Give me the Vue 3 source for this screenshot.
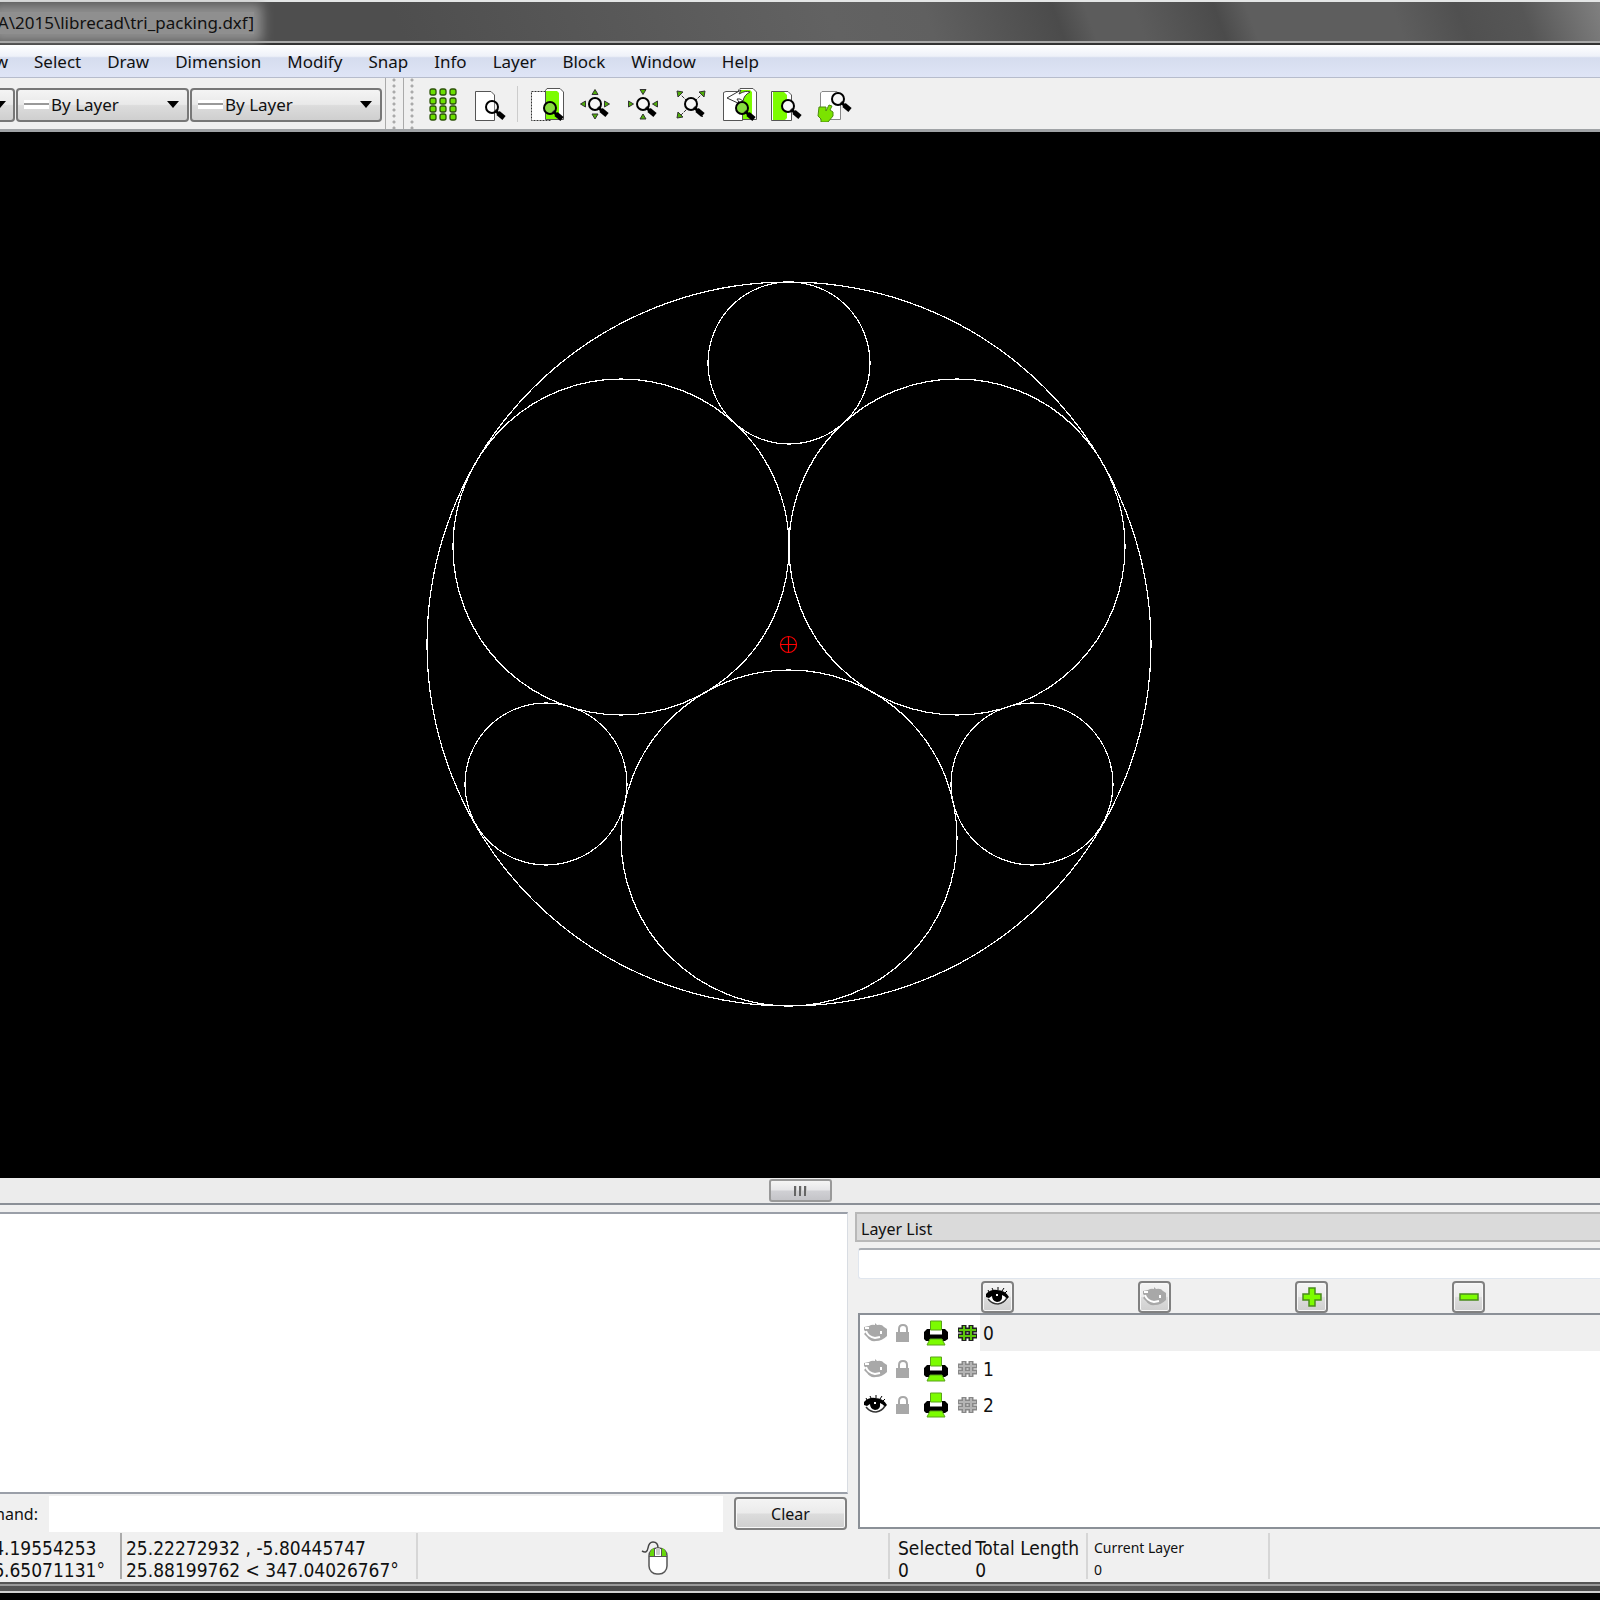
<script setup>
import { ref } from 'vue'

const menus = ['Select', 'Draw', 'Dimension', 'Modify', 'Snap', 'Info', 'Layer', 'Block', 'Window', 'Help']

const views = [
  { id: 'zoom-window', label: 'Zoom redraw' },
  { id: 'zoom-in', label: 'Zoom in' },
  { id: 'zoom-out', label: 'Zoom out' },
  { id: 'zoom-auto', label: 'Auto zoom' },
  { id: 'zoom-previous', label: 'Previous view' },
  { id: 'zoom-area', label: 'Window zoom' },
  { id: 'zoom-pan', label: 'Zoom panning' }
]

const lens = {
  'zoom-window': [27, 22],
  'zoom-in': [24, 18],
  'zoom-out': [24, 18],
  'zoom-auto': [24, 18],
  'zoom-previous': [27, 22],
  'zoom-area': [25, 20],
  'zoom-pan': [27, 13]
}

const layers = ref([
  { name: '0', visible: false, construction: true },
  { name: '1', visible: false, construction: false },
  { name: '2', visible: true, construction: false }
])
const current = ref('0')
const filter = ref('')
const command = ref('')
const log = ref('')

const circles = [
  [789, 513, 362], [621, 416, 168], [957, 416, 168], [789, 707, 168],
  [789, 232, 81], [546, 653, 81], [1032, 653, 81]
]
</script>

<template>
  <div class="window">
    <svg class="defs" width="0" height="0" aria-hidden="true">
      <defs>
        <g id="lens">
          <path d="M6 6L12 11" stroke="#000" stroke-width="5" stroke-linecap="butt" />
          <path d="M3 3L7 7" stroke="#000" stroke-width="3" />
          <circle r="6" fill="#fff" fill-opacity=".25" stroke="#000" stroke-width="2" />
        </g>
        <g id="eye-on">
          <path d="M0 9Q6 2 13 4Q20 5 23 11Q18 18 10 18Q5 17 1 13L4 9Z" fill="#fff" />
          <path d="M0 7Q5 2 11 3Q19 3 23 10L21 12Q19 9 16 8Q17 15 11 15Q6 14 6 9L3 11L0 10Z" fill="#000" />
          <path d="M2 12Q6 17 12 17Q18 16 21 11" fill="none" stroke="#333" stroke-width="1.5" />
          <path d="M3 5L2 3M7 3L6 1M12 3V0M16 4L18 1M19 6L21 4" stroke="#000" stroke-width="1" />
          <rect x="10" y="7" width="2" height="2" fill="#fff" />
        </g>
        <g id="eye-off">
          <path d="M0 4L5 3Q8 1 11 2V0L13 2Q18 1 20 4L23 6V13Q18 18 12 18Q6 19 3 14L0 11L2 9L0 7Z" fill="#a8a8a8" />
          <path d="M2 8Q4 14 11 15L16 14M17 11V8M1 5H5" fill="none" stroke="#fff" stroke-width="2" />
        </g>
      </defs>
    </svg>

    <header class="titlebar">
      <h1 class="title">A\2015\librecad\tri_packing.dxf]</h1>
    </header>

    <nav class="menubar">
      <button class="menu cut">View</button>
      <button v-for="m in menus" :key="m" class="menu">{{ m }}</button>
    </nav>

    <div class="toolbar">
      <div class="combos">
        <label class="combo color">
          <select aria-label="Color"><option></option></select>
          <svg class="arrow" viewBox="6 0 6 7"><path d="M0 0H12L6 7Z" /></svg>
        </label>
        <label class="combo width">
          <span class="stroke"></span>
          <select aria-label="Line width"><option>By Layer</option></select>
          <svg class="arrow" viewBox="0 0 12 7"><path d="M0 0H12L6 7Z" /></svg>
        </label>
        <label class="combo type">
          <span class="stroke"></span>
          <select aria-label="Line type"><option>By Layer</option></select>
          <svg class="arrow" viewBox="0 0 12 7"><path d="M0 0H12L6 7Z" /></svg>
        </label>
      </div>
      <span class="grip"></span>
      <span class="grip last"></span>
      <div class="tools">
        <button class="tool" aria-label="Grid">
          <svg viewBox="0 0 48 36">
            <template v-for="y in [6, 15, 23, 31]" :key="y">
              <rect v-for="x in [16, 26, 36]" :key="x" :x="x - 3" :y="y - 3" width="6" height="6" rx="2" fill="#6be000" stroke="#2c5208" stroke-width="1.3" />
            </template>
          </svg>
        </button>
        <button class="tool" aria-label="Print preview">
          <svg viewBox="0 0 48 36">
            <path d="M10.500 5.500H26L29.500 9V34.500H10.500Z" fill="#fff" stroke="#555" />
            <use href="#lens" x="27" y="21" />
          </svg>
        </button>
        <span class="rule"></span>
        <button v-for="v in views" :key="v.id" class="tool" :aria-label="v.label">
          <svg viewBox="0 0 48 36">
            <g v-if="v.id === 'zoom-window'">
              <path d="M8.500 5.500H27.500V34.500H8.500Z" fill="#fff" stroke="#333" stroke-dasharray="2 1" />
              <path d="M22.500 4.500L24 2.500H37L40.500 6V33.500H22.500Z" fill="#fff" stroke="#555" />
              <path d="M23 5H34L36 7V31L34 33H23Z" fill="#7cfc00" />
            </g>
            <g v-else-if="v.id === 'zoom-in'" fill="#4fae08" stroke="#333">
              <path d="M24 3.500L27 8.500H21Z" /><path d="M24 33L27 28H21Z" />
              <path d="M9.500 18L14.500 15V21Z" /><path d="M38.500 18L33.500 15V21Z" />
            </g>
            <g v-else-if="v.id === 'zoom-out'" fill="#4fae08" stroke="#333">
              <path d="M24 8.500L27 3.500H21Z" /><path d="M24 28L27 33H21Z" />
              <path d="M14.500 18L9.500 15V21Z" /><path d="M33.500 18L38.500 15V21Z" />
            </g>
            <g v-else-if="v.id === 'zoom-auto'" fill="#4fae08" stroke="#333">
              <path d="M12 7L36 31M36 7L12 31" stroke-dasharray="3 1" />
              <path d="M10 5L16 6L11 11Z" /><path d="M38 5L37 11L32 6Z" /><path d="M10 32L11 26L16 31Z" />
            </g>
            <g v-else-if="v.id === 'zoom-previous'">
              <path d="M23.500 4L25 2.500H38L41.500 6V33.500H23.500Z" fill="#fff" stroke="#555" />
              <path d="M25 4H35L37 6V31L35 33H25Z" fill="#7cfc00" />
              <path d="M8.500 6.500L11 5.500H23V12H27.500V34.500H8.500Z" fill="#fff" stroke="#555" />
              <path d="M12 12L26 4L24 8Q31 4 35 6Q29 9 28 15Q25 12 22 13L25 18Z" fill="#fff" stroke="#333" />
            </g>
            <g v-else-if="v.id === 'zoom-area'">
              <path d="M8.500 5.500H25L28.500 9V34.500H8.500Z" fill="#fff" stroke="#555" />
              <path d="M10 6H21L24 9V32L22 34H10Z" fill="#7cfc00" />
            </g>
            <g v-else>
              <path d="M9.500 7L11 5.500H26L29.500 9V33.500H9.500Z" fill="#fff" stroke="#888" />
              <path d="M18 19L15 25V21H8L7 30L10 33V36H17L22 30V26L19 24L21 20Z" fill="#7be300" stroke="#4d8a10" />
            </g>
            <circle v-if="v.id === 'zoom-window' || v.id === 'zoom-previous'" :cx="lens[v.id][0]" :cy="lens[v.id][1]" r="6" fill="#5fd000" />
            <circle v-else :cx="lens[v.id][0]" :cy="lens[v.id][1]" r="6" fill="#f4f4f4" />
            <use href="#lens" :x="lens[v.id][0]" :y="lens[v.id][1]" />
          </svg>
        </button>
      </div>
    </div>

    <svg class="canvas" viewBox="0 1 1600 1046" role="img" aria-label="Drawing">
      <circle v-for="(c, i) in circles" :key="i" :cx="c[0]" :cy="c[1]" :r="c[2]" fill="none" stroke="#fff" stroke-width="1.2" shape-rendering="crispEdges" />
      <g fill="none" stroke="#f00" stroke-width="1.2">
        <circle cx="788.500" cy="513.500" r="8" />
        <path d="M780 513.500H797M788.500 505V522" />
      </g>
    </svg>

    <div class="scroll">
      <button class="thumb" aria-label="Scroll"><i></i><i></i><i></i></button>
    </div>

    <div class="docks">
      <section class="console">
        <textarea v-model="log" class="log" aria-label="Command history" readonly></textarea>
        <div class="entry">
          <label class="prompt" for="command"><span>Command:</span></label>
          <input id="command" v-model="command" class="field" type="text">
          <button class="push clear" @click="log = ''">Clear</button>
        </div>
      </section>

      <section class="layers">
        <h2 class="dock-title">Layer List</h2>
        <input v-model="filter" class="filter" type="text" aria-label="Filter layers">
        <div class="actions">
          <button class="push small" aria-label="Show all layers"><svg viewBox="0 0 24 20"><use href="#eye-on" /></svg></button>
          <button class="push small" aria-label="Hide all layers"><svg viewBox="0 0 24 20"><use href="#eye-off" /></svg></button>
          <button class="push small" aria-label="Add layer">
            <svg viewBox="0 0 24 20"><path d="M9 1H15V7H21V13H15V19H9V13H3V7H9Z" fill="#7cfc00" stroke="#4a8a1c" stroke-width="1.500" /></svg>
          </button>
          <button class="push small" aria-label="Remove layer">
            <svg viewBox="0 0 24 20"><path d="M3 7H21V13H3Z" fill="#7cfc00" stroke="#4a8a1c" stroke-width="1.500" /></svg>
          </button>
        </div>
        <div class="list">
          <table>
            <tbody>
              <tr v-for="l in layers" :key="l.name" :class="{ selected: l.name === current }" @click="current = l.name">
                <td class="c-eye"><svg width="24" height="20" viewBox="0 0 24 20"><use :href="l.visible ? '#eye-on' : '#eye-off'" /></svg></td>
                <td class="c-lock">
                  <svg width="14" height="20" viewBox="0 0 14 20">
                    <path d="M3 10V6Q3 2 7 2Q11 2 11 6V10" fill="none" stroke="#a8a8a8" stroke-width="2" />
                    <rect x="0" y="9" width="13" height="10" fill="#a8a8a8" />
                  </svg>
                </td>
                <td class="c-print">
                  <svg width="26" height="26" viewBox="0 0 26 26">
                    <path d="M4 9L1 12V19L3 21H22L25 19V12L22 9H18V14H8V9Z" fill="#000" />
                    <path d="M7 10H19V15H7Z" fill="#fff" />
                    <path d="M5 16H21" stroke="#000" stroke-width="3" />
                    <path d="M7.500 1H18.500V10H7.500Z" fill="#7cfc00" stroke="#5ba31b" />
                    <path d="M7 19H19L22 25H4Z" fill="#7cfc00" stroke="#5ba31b" />
                  </svg>
                </td>
                <td class="c-hash">
                  <svg width="20" height="18" viewBox="0 0 20 18">
                    <g fill="none" :stroke="l.construction ? '#222' : '#888'" stroke-width="5">
                      <path d="M0 6H19M0 12H19M6 1V17M13 1V17" />
                    </g>
                    <path d="M1 6H18M1 12H18M6 2V16M13 2V16" fill="none" :stroke="l.construction ? '#5cc70a' : '#b4b4b4'" stroke-width="2" />
                  </svg>
                </td>
                <td class="c-name">{{ l.name }}</td>
              </tr>
            </tbody>
          </table>
        </div>
      </section>
    </div>

    <footer class="status">
      <div class="cell abs"><div><div>14.19554253</div><div>26.65071131°</div></div></div>
      <div class="cell rel"><div>25.22272932 , -5.80445747</div><div>25.88199762 &lt; 347.04026767°</div></div>
      <div class="cell mouse">
        <svg width="28" height="36" viewBox="0 0 28 36">
          <path d="M1 11Q6 14 7 8Q8 2 12 2Q17 2 17 8" fill="none" stroke="#444" stroke-width="1.500" />
          <rect x="8" y="8" width="18" height="26" rx="8" fill="#fff" stroke="#555" stroke-width="1.500" />
          <path d="M9 16V13Q10 9 13 8V16ZM25 16V13Q24 9 21 8V16Z" fill="#67d80a" />
          <path d="M13.500 8V16M20.500 8V16M8 16.500H26" stroke="#555" />
          <rect x="15" y="8" width="4" height="7" rx="1" fill="#ccc" />
        </svg>
      </div>
      <div class="cell sel">
        <div><div>Selected</div><div>0</div></div>
        <div><div>Total Length</div><div>0</div></div>
      </div>
      <div class="cell layer"><div>Current Layer</div><div>0</div></div>
      <div class="cell rest"></div>
    </footer>
    <div class="frame"></div>
  </div>
</template>

<style>
body { background: #000; }
</style>

<style scoped>
* { box-sizing: border-box; }
.window {
  display: flex;
  flex-direction: column;
  min-height: 100vh;
  padding-bottom: 7px;
  overflow: hidden;
  background: #000;
  color: #111;
  font: 16px/22px "Noto Sans", sans-serif;
}
.defs { position: absolute; }
button, input, select, textarea { font: inherit; color: inherit; margin: 0; border: 0; padding: 0; border-radius: 0; }
h1, h2 { margin: 0; font: inherit; }

.titlebar {
  display: flex;
  align-items: center;
  height: 45px;
  border-top: 2px solid #e4e6e6;
  border-bottom: 2px solid #333;
  box-shadow: inset 0 -2px #aaa;
  background: linear-gradient(70deg, #4e4e4e 0 25%, #626262 52%, #606060 58%, #4b4b4b 66%, #5c5c5c 68%, #5c5c5c 71%, #4b4b4b 76%, #5e5e5e 78%, #5e5e5e 87%, #505050 91%, #565656 95%, #808080);
}
.title {
  display: flex;
  justify-content: flex-end;
  width: 254px;
  white-space: nowrap;
  font: 17px/22px "Noto Sans", sans-serif;
  background: rgba(160, 160, 160, .8);
  box-shadow: 0 0 12px 8px rgba(160, 160, 160, .8);
}

.menubar {
  display: flex;
  align-items: center;
  gap: 26px;
  height: 33px;
  padding-top: 1px;
  font-size: 17px;
  background: linear-gradient(#fff, #eef1f9 35%, #d5dcee 40%, #dfe5f6);
  border-bottom: 1px solid #b6bccc;
}
.menu { background: none; white-space: nowrap; }
.cut { display: flex; justify-content: flex-end; width: 8px; }

.toolbar {
  display: flex;
  align-items: center;
  height: 54px;
  border-bottom: 3px solid #a0a3a6;
  background: #f0f0f0;
}
.combos { display: flex; gap: 1px; padding: 2px 3px 0 0; }
.combo {
  display: flex;
  align-items: center;
  height: 34px;
  padding: 0 8px 0 6px;
  border: 2px solid #777;
  border-radius: 4px;
  font-size: 17px;
  background: linear-gradient(#f4f4f4, #e9e9e9 48%, #dcdcdc 52%, #cfcfcf);
}
.color { width: 15px; padding: 0; border-left: 0; border-radius: 0 4px 4px 0; justify-content: flex-end; }
.color select { width: 0; }
.color .arrow { width: 6px; margin-right: 7px; }
.width { width: 173px; }
.type { width: 192px; }
.combo select { flex: 1; min-width: 0; appearance: none; background: none; outline: 0; }
.stroke { width: 25px; height: 9px; margin-right: 2px; border: solid #fff; border-width: 3px 0 4px; background: #999; }
.arrow { flex: none; width: 12px; height: 7px; }
.grip {
  width: 18px;
  height: 51px;
  border-left: 1px solid #aaa;
  background: radial-gradient(circle at 8px 3px, #aaa 1px, transparent 2px) 0 5px / 18px 6px repeat-y;
}
.last { width: 14px; }
.tools { display: flex; align-items: center; }
.tool { width: 48px; height: 36px; background: none; }
.tool svg { display: block; width: 48px; height: 36px; }
.rule { width: 1px; height: 36px; margin: 0 5px 0 4px; background: #ccc; }

.canvas { display: block; flex: 1 1 0; width: 100%; min-height: 600px; background: #000; }

.scroll {
  display: flex;
  justify-content: center;
  height: 27px;
  padding-top: 1px;
  background: #ececec;
  border-bottom: 2px solid #8b9097;
}
.thumb {
  display: flex;
  align-items: center;
  justify-content: center;
  gap: 2px;
  width: 63px;
  height: 23px;
  border: 2px solid #999;
  border-radius: 3px;
  background: linear-gradient(#f5f5f5, #e6e6e8 48%, #d0d0d4 52%, #c4c4c8);
}
.thumb i { width: 3px; height: 10px; background: #666; border-right: 1px solid #ccc; }

.docks { display: flex; gap: 7px; height: 328px; padding-top: 7px; background: #f0f0f0; }
.console { display: flex; flex-direction: column; width: 53%; }
.log { flex: 1; resize: none; outline: 0; background: #fff; border: solid #9a9fa8; border-width: 2px 1px 2px 0; border-right-color: #d8dce2; }
.entry { display: flex; align-items: center; height: 39px; gap: 11px; }
.prompt { display: flex; justify-content: flex-end; width: 38px; white-space: nowrap; }
.field { flex: 1; height: 36px; background: #fff; outline: 0; }
.push {
  border: 2px solid #808080;
  border-radius: 4px;
  background: linear-gradient(#f4f4f4, #ebebeb 48%, #dcdcdc 52%, #cfcfcf);
  box-shadow: inset 0 0 0 1px #f8f8f8;
}
.clear { width: 113px; height: 33px; margin-right: 1px; }

.layers { flex: 1; display: flex; flex-direction: column; min-width: 0; }
.dock-title { height: 30px; padding: 4px 4px 0; border: 2px solid #b8b8b8; border-right: 0; background: #dadada; }
.filter { height: 31px; margin: 6px 0 1px 3px; border: 1px solid #e0e6ee; border-top: 2px solid #a9adb3; border-right: 0; border-radius: 3px 0 0 3px; background: #fff; outline: 0; }
.actions { display: grid; grid-template-columns: repeat(4, 157px); justify-items: center; align-items: center; height: 33px; padding-left: 64px; }
.small { display: flex; align-items: center; justify-content: center; width: 33px; height: 32px; }
.small svg { width: 24px; height: 20px; flex: none; }
.list { flex: 1; margin: 0 0 4px 3px; border: 2px solid #8b9097; border-right: 0; background: #fff; }
table { width: 100%; border-collapse: collapse; table-layout: fixed; }
td { height: 36px; padding: 0; line-height: 0; }
.c-eye { width: 36px; padding-left: 4px; }
.c-lock { width: 27px; }
.c-print { width: 35px; }
.c-hash { width: 22px; }
.c-name { padding-left: 3px; font: 19px/24px "DejaVu Sans Condensed", "Noto Sans", sans-serif; }
.selected .c-name { background: #efefef; }

.status { display: flex; height: 49px; background: #f0f0f0; font: 19px/22px "DejaVu Sans Condensed", "Noto Sans", sans-serif; white-space: nowrap; }
.cell { height: 46px; padding: 4px 0 0 4px; border-left: 2px solid #d6d6d6; }
.abs { display: flex; justify-content: flex-end; width: 120px; border: 0; padding-left: 0; padding-right: 15px; }
.rel { width: 296px; border-left-color: #aaa; }
.mouse { flex: 1; display: flex; justify-content: center; padding-top: 7px; }
.sel { display: flex; gap: 3px; width: 198px; padding-left: 8px; }
.layer { width: 182px; padding-left: 6px; font: 14px/22px "Noto Sans", sans-serif; }
.rest { width: 332px; }
.frame { height: 11px; border: solid #555; border-width: 2px 0; border-bottom-color: #d0d0d0; background: linear-gradient(90deg, #555, #444 30%, #606060 70%, #4a4a4a); box-shadow: inset 0 2px #999; }
</style>
